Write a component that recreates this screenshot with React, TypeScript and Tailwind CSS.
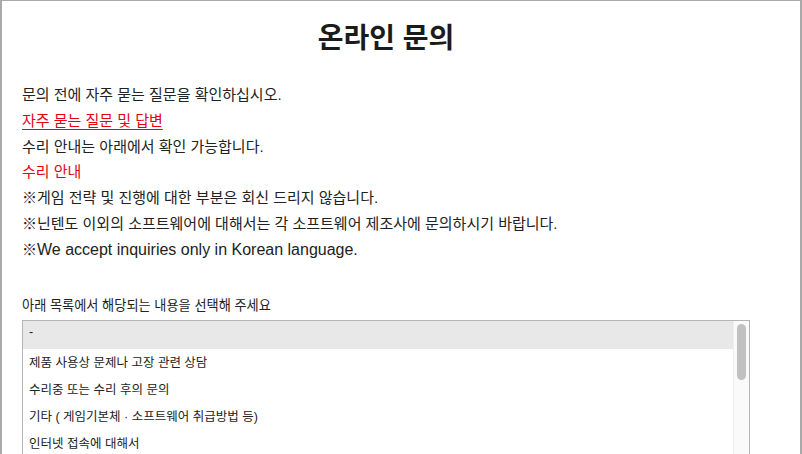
import React from "react";

const font = { fontFamily: '"Liberation Sans", "Noto Sans CJK KR", sans-serif' };

export default function App() {
  const options = [
    "-",
    "제품 사용상 문제나 고장 관련 상담",
    "수리중 또는 수리 후의 문의",
    "기타 ( 게임기본체 · 소프트웨어 취급방법 등)",
    "인터넷 접속에 대해서",
    "기타",
  ];
  return (
    <div
      className="w-[802px] h-[454px] overflow-hidden bg-white border-t border-l-2 border-r-2 border-[#a9a9a9]"
      style={font}
    >
      <div className="w-[728px] ml-[20px] flex flex-col">
        <h1 className="pt-[18px] text-center text-[28px] leading-[40px] font-bold text-[#1b1b1b]">
          온라인 문의
        </h1>
        <div className="mt-[23px] text-[15px] leading-[25.8px] text-[#222]">
          <p>문의 전에 자주 묻는 질문을 확인하십시오.</p>
          <p>
            <a className="text-[#e60012] underline underline-offset-[3px]">자주 묻는 질문 및 답변</a>
          </p>
          <p>수리 안내는 아래에서 확인 가능합니다.</p>
          <p className="text-[#e60012]">수리 안내</p>
          <p>※게임 전략 및 진행에 대한 부분은 회신 드리지 않습니다.</p>
          <p>※닌텐도 이외의 소프트웨어에 대해서는 각 소프트웨어 제조사에 문의하시기 바랍니다.</p>
          <p>
            ※<span className="text-[16px]">We accept inquiries only in Korean language.</span>
          </p>
        </div>
        <label className="mt-[34px] text-[13.2px] leading-[18px] text-[#222]">
          아래 목록에서 해당되는 내용을 선택해 주세요
        </label>
        <div className="mt-[5px] h-[140px] border border-[#b5b5b5] border-b-0 flex">
          <div className="flex-1 flex flex-col">
            {options.map((o, i) => (
              <div
                key={i}
                className={
                  i === 0
                    ? "h-[28px] shrink-0 flex items-center pl-[6px] text-[12.5px] text-[#222] bg-[#e8e8e8] pb-[4px]"
                    : "h-[27px] shrink-0 flex items-center pl-[6px] pt-[2px] text-[12.5px] text-[#222]"
                }
              >
                {o}
              </div>
            ))}
          </div>
          <div className="w-[16px] bg-[#fafafa] border-l border-[#eeeeee] flex justify-center pt-[3px]">
            <div className="w-[9px] h-[56px] rounded-full bg-[#c1c1c1]" />
          </div>
        </div>
      </div>
    </div>
  );
}
